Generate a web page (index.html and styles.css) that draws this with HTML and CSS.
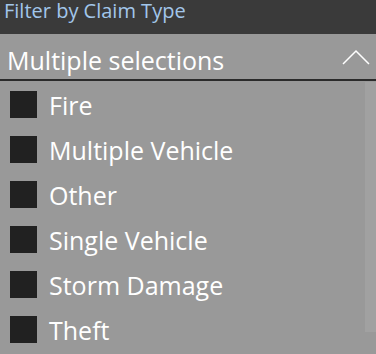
FILE: index.html
```html
<!DOCTYPE html>
<html>
<head>
<meta charset="utf-8">
<link rel="stylesheet" href="styles.css">
</head>
<body>
<div class="slicer">
  <div class="title">Filter by Claim Type</div>
  <div class="dropdown-head">
    <span class="head-text">Multiple selections</span>
    <svg class="chevron" width="28" height="16" viewBox="0 0 28 16"><polyline points="1,15 14,2 27,15" fill="none" stroke="#ffffff" stroke-width="1.5"/></svg>
  </div>
  <div class="list-wrap">
    <ul class="list">
      <li class="item"><span class="box"></span><span class="label">Fire</span></li>
      <li class="item"><span class="box"></span><span class="label">Multiple Vehicle</span></li>
      <li class="item"><span class="box"></span><span class="label">Other</span></li>
      <li class="item"><span class="box"></span><span class="label">Single Vehicle</span></li>
      <li class="item"><span class="box"></span><span class="label">Storm Damage</span></li>
      <li class="item"><span class="box"></span><span class="label">Theft</span></li>
    </ul>
    <div class="scrollbar"></div>
  </div>
</div>
</body>
</html>
```
FILE: styles.css
```css
html, body {
  margin: 0;
  padding: 0;
}
body {
  width: 376px;
  height: 354px;
  overflow: hidden;
  background: #999999;
  font-family: "Open Sans", "Noto Sans", sans-serif;
}
.slicer {
  display: flex;
  flex-direction: column;
}
.title {
  height: 34px;
  background: #3a3a3a;
  color: #a2c6ea;
  font-size: 20px;
  line-height: 22px;
  padding-left: 4px;
  box-sizing: border-box;
  white-space: nowrap;
}
.dropdown-head {
  height: 47px;
  box-sizing: border-box;
  border-bottom: 2px solid #2b2b2b;
  display: flex;
  align-items: center;
  justify-content: space-between;
  padding: 0 6px 0 7px;
}
.head-text {
  color: #ffffff;
  font-size: 25px;
  line-height: 30px;
  margin-top: 6px;
  white-space: nowrap;
}
.chevron {
  display: block;
}
.list-wrap {
  display: flex;
  justify-content: space-between;
  align-items: flex-start;
}
.list {
  list-style: none;
  margin: 0;
  padding: 0;
  padding-top: 1px;
}
.item {
  height: 45px;
  display: flex;
  align-items: center;
  padding-left: 10px;
}
.box {
  width: 27px;
  height: 27px;
  background: #212121;
  margin-right: 12px;
}
.label {
  color: #ffffff;
  font-size: 25px;
  line-height: 28px;
  white-space: nowrap;
}
.scrollbar {
  width: 11px;
  height: 250px;
  background: #a1a1a1;
  margin-top: 1px;
}
```
